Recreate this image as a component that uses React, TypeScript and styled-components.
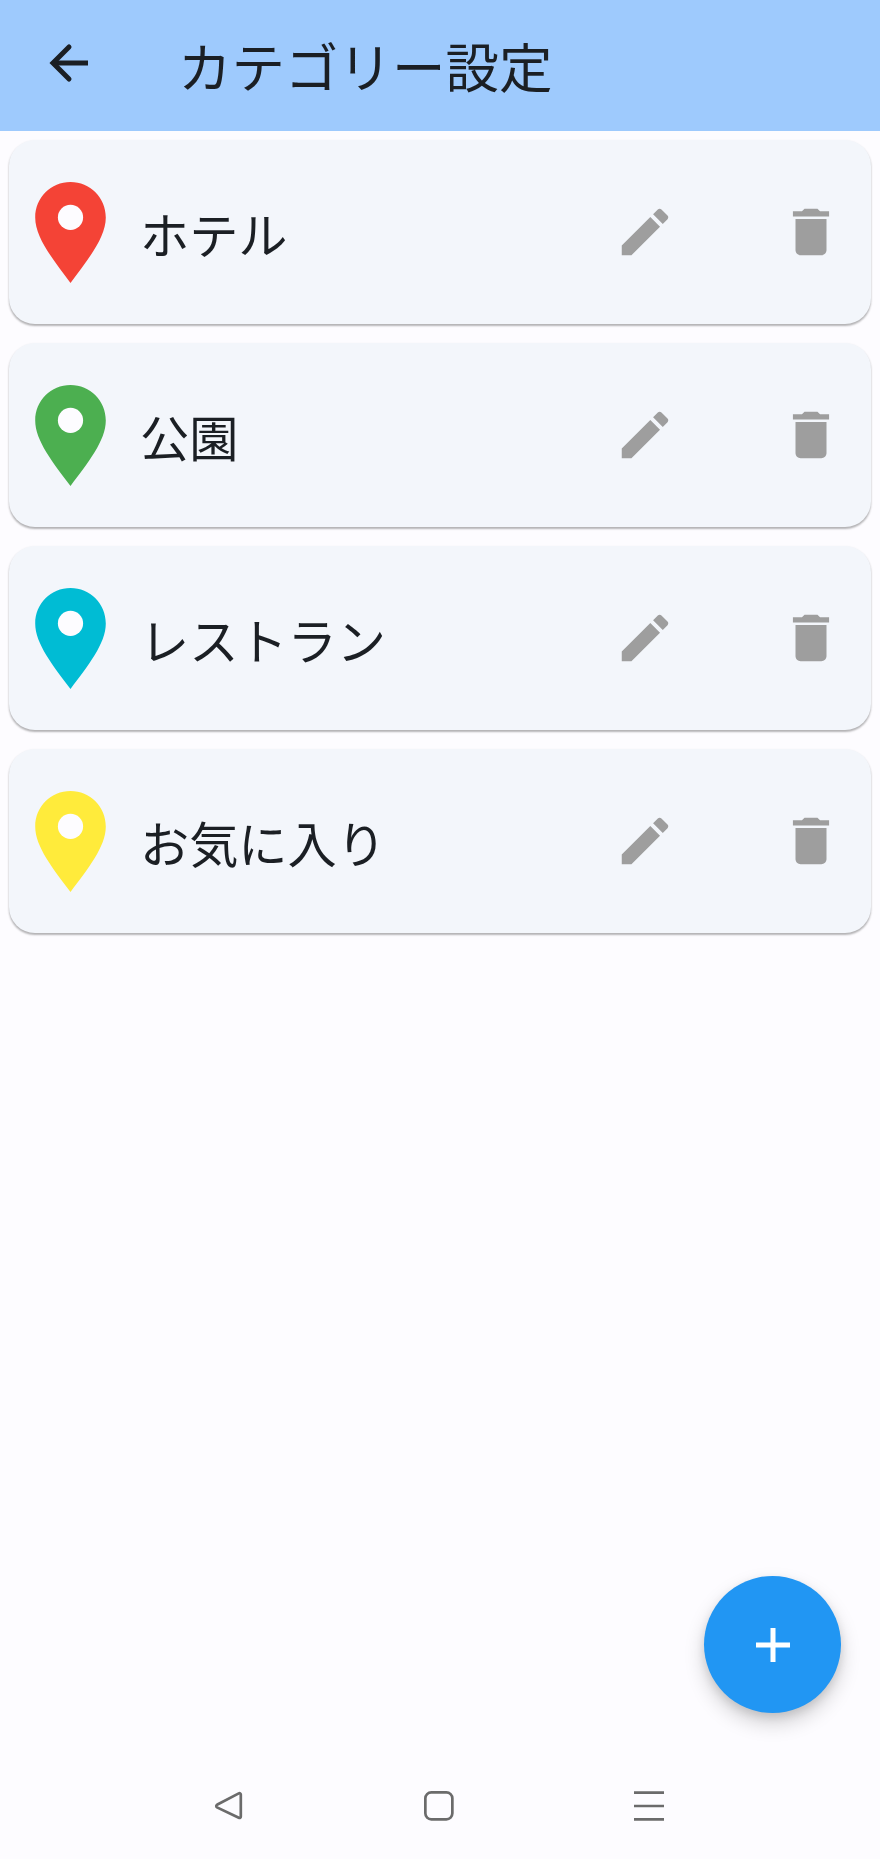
import React from "react";
import styled, { createGlobalStyle } from "styled-components";

const GlobalStyle = createGlobalStyle`
  html, body {
    margin: 0;
    padding: 0;
    background: #fdfcff;
  }
  body {
    font-family: "Noto Sans CJK JP", "Noto Sans", sans-serif;
    color: #1b1f24;
  }
`;

const Screen = styled.div`
  position: relative;
  width: 880px;
  height: 1859px;
  display: flex;
  flex-direction: column;
  overflow: hidden;
  background: #fdfcff;
`;

const AppBar = styled.header`
  height: 131px;
  flex: none;
  display: flex;
  align-items: center;
  padding-left: 49px;
  background: #9ecafd;
`;

const BackButton = styled.svg`
  width: 40px;
  height: 40px;
  flex: none;
  margin-top: -6px;
  fill: none;
  stroke: #1b1f24;
  stroke-width: 5;
`;

const Title = styled.h1`
  margin: -2px 0 0 89px;
  font-size: 53.5px;
  font-weight: 400;
  line-height: 1;
  white-space: nowrap;
`;

const List = styled.main`
  flex: 1;
  display: flex;
  flex-direction: column;
  gap: 19px;
  padding: 9px 9px 0;
`;

const Card = styled.section`
  height: 184px;
  display: flex;
  align-items: center;
  padding-left: 1px;
  border-radius: 26px;
  background: #f3f6fb;
  box-shadow: 0 2px 2px -0.5px rgba(0, 0, 0, 0.26), 0 1px 3px rgba(0, 0, 0, 0.07);
`;

const PinIcon = styled.svg`
  width: 121px;
  height: 121px;
  flex: none;
`;

const Name = styled.span`
  flex: 1;
  margin: 1px 0 0 9px;
  font-size: 49.2px;
  line-height: 1;
`;

const ActionIcon = styled.svg`
  width: 62px;
  height: 62px;
  flex: none;
  fill: #9e9e9e;
`;

const Actions = styled.div`
  display: flex;
  gap: 104px;
  margin-right: 29px;
`;

const Fab = styled.button`
  position: absolute;
  left: 704px;
  top: 1576px;
  width: 137px;
  height: 137px;
  display: flex;
  align-items: center;
  justify-content: center;
  padding: 0;
  border: none;
  border-radius: 50%;
  background: #2196f3;
  box-shadow: 0 10px 20px rgba(0, 0, 0, 0.18), 0 4px 8px rgba(0, 0, 0, 0.1);
`;

const PlusIcon = styled.svg`
  width: 34px;
  height: 34px;
  stroke: #fff;
  stroke-width: 5;
`;

const NavBar = styled.nav`
  height: 100px;
  flex: none;
  display: grid;
  grid-template-columns: 30px 30px 30px;
  justify-content: center;
  column-gap: 180px;
  padding: 32px 2px 0 0;
  box-sizing: border-box;
`;

const NavIcon = styled.svg`
  width: 30px;
  height: 32px;
  fill: none;
  stroke: #6b6b6b;
  stroke-width: 2.7;
`;

const categories = [
  { name: "ホテル", color: "#f44336" },
  { name: "公園", color: "#4caf50" },
  { name: "レストラン", color: "#00bcd4" },
  { name: "お気に入り", color: "#ffeb3b" },
];

export default function App() {
  return (
    <>
      <GlobalStyle />
      <Screen>
        <AppBar>
          <BackButton viewBox="0 0 40 40">
            <path d="M39 20H5" />
            <path d="M20 4L4 20l16 16" strokeLinecap="round" />
          </BackButton>
          <Title>カテゴリー設定</Title>
        </AppBar>
        <List>
          {categories.map((c) => (
            <Card key={c.name}>
              <PinIcon viewBox="0 0 24 24">
                <path
                  d="M12 2C8.13 2 5 5.13 5 9c0 4 3.5 8.3 7 13 3.5-4.7 7-9 7-13 0-3.87-3.13-7-7-7z"
                  fill={c.color}
                />
                <circle cx="12" cy="9" r="2.5" fill="#fdfcff" />
              </PinIcon>
              <Name>{c.name}</Name>
              <Actions>
                <ActionIcon viewBox="0 0 24 24">
                  <path d="M3 17.25V21h3.75L17.81 9.94l-3.75-3.75L3 17.25zM20.71 7.04c.39-.39.39-1.02 0-1.41l-2.34-2.34c-.39-.39-1.02-.39-1.41 0l-1.83 1.83 3.75 3.75 1.83-1.83z" />
                </ActionIcon>
                <ActionIcon viewBox="0 0 24 24">
                  <path d="M6 19c0 1.1.9 2 2 2h8c1.1 0 2-.9 2-2V7H6v12zM19 4h-3.5l-1-1h-5l-1 1H5v2h14V4z" />
                </ActionIcon>
              </Actions>
            </Card>
          ))}
        </List>
        <NavBar>
          <NavIcon viewBox="0 0 30 32">
            <path d="M26.8 3.6v22c0 1.2-1 1.7-2 1.2L3 16.4c-1-.6-1-2 0-2.6L24.8 2.4c1-.5 2 0 2 1.2z" />
          </NavIcon>
          <NavIcon viewBox="0 0 30 32">
            <rect x="1.35" y="1.35" width="27" height="27" rx="6" />
          </NavIcon>
          <NavIcon viewBox="0 0 30 32">
            <path d="M0 1.7h30M0 15h30M0 28.3h30" />
          </NavIcon>
        </NavBar>
        <Fab aria-label="add">
          <PlusIcon viewBox="0 0 34 34">
            <path d="M17 0v34M0 17h34" />
          </PlusIcon>
        </Fab>
      </Screen>
    </>
  );
}
